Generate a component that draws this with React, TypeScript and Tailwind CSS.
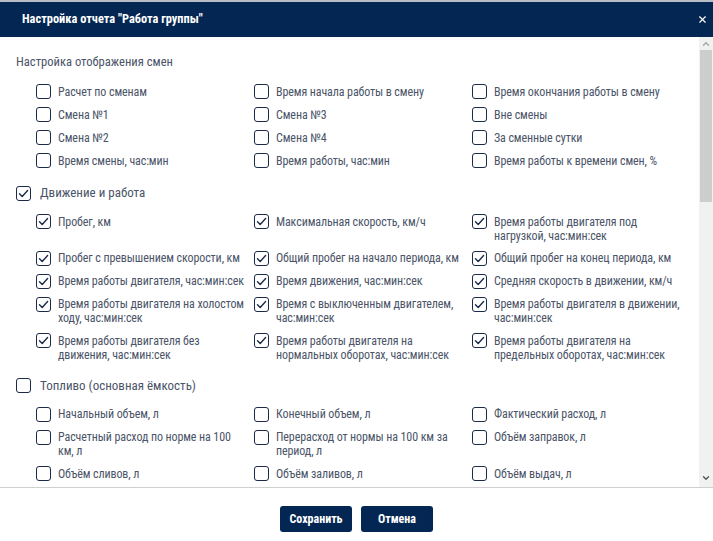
import { X, ChevronUp, ChevronDown } from 'lucide-react';

type Item = { label: string; checked?: boolean };

const shiftItems: string[][] = [
  ['Расчет по сменам', 'Время начала работы в смену', 'Время окончания работы в смену'],
  ['Смена №1', 'Смена №3', 'Вне смены'],
  ['Смена №2', 'Смена №4', 'За сменные сутки'],
  ['Время смены, час:мин', 'Время работы, час:мин', 'Время работы к времени смен, %'],
];

const motionItems: string[][] = [
  ['Пробег, км', 'Максимальная скорость, км/ч', 'Время работы двигателя под нагрузкой, час:мин:сек'],
  ['Пробег с превышением скорости, км', 'Общий пробег на начало периода, км', 'Общий пробег на конец периода, км'],
  ['Время работы двигателя, час:мин:сек', 'Время движения, час:мин:сек', 'Средняя скорость в движении, км/ч'],
  ['Время работы двигателя на холостом ходу, час:мин:сек', 'Время с выключенным двигателем, час:мин:сек', 'Время работы двигателя в движении, час:мин:сек'],
  ['Время работы двигателя без движения, час:мин:сек', 'Время работы двигателя на нормальных оборотах, час:мин:сек', 'Время работы двигателя на предельных оборотах, час:мин:сек'],
];

const fuelItems: string[][] = [
  ['Начальный объем, л', 'Конечный объем, л', 'Фактический расход, л'],
  ['Расчетный расход по норме на 100 км, л', 'Перерасход от нормы на 100 км за период, л', 'Объём заправок, л'],
  ['Объём сливов, л', 'Объём заливов, л', 'Объём выдач, л'],
  ['Средний расход, л/100 км', 'Средний расход в движении, л/ч', 'Расход на холостом ходу, л'],
];

function Checkbox({ checked }: { checked?: boolean }) {
  return (
    <span className="shrink-0 w-[15px] h-[15px] border-[1.5px] border-[#1b2a47] rounded-[3px] bg-white flex items-center justify-center">
      {checked && (
        <svg width="11" height="11" viewBox="0 0 11 11" fill="none">
          <path d="M1.5 5.8 L4.2 8.4 L9.6 2.6" stroke="#1b2a47" strokeWidth="1.4" strokeLinecap="round" strokeLinejoin="round" />
        </svg>
      )}
    </span>
  );
}

function Option({ label, checked }: Item) {
  return (
    <label className="flex items-start gap-[7px]">
      <Checkbox checked={checked} />
      <span className="w-[190px] text-[12px] leading-[14px] pt-[0.5px] tracking-[-0.1px] text-[#4b5468]">{label}</span>
    </label>
  );
}

function Grid({ rows, checked }: { rows: string[][]; checked?: boolean }) {
  return (
    <div className="grid grid-cols-[218px_218px_218px] gap-y-[8px] pl-[36px]">
      {rows.flat().map((label, i) => (
        <Option key={i} label={label} checked={checked} />
      ))}
    </div>
  );
}

function SectionHeader({ title, checked }: { title: string; checked?: boolean }) {
  return (
    <div className="flex items-center gap-[9px] pl-[16px] mb-[13px]">
      <Checkbox checked={checked} />
      <span className="text-[13px] leading-[16px] text-[#4b5468]">{title}</span>
    </div>
  );
}

export default function App() {
  return (
    <div
      className="w-[713px] h-[541px] flex flex-col bg-white overflow-hidden font-stretch-[87.5%]"
      style={{ fontFamily: '"Roboto Condensed", "Liberation Sans Narrow", Roboto, "Noto Sans", sans-serif' }}
    >
      <div className="h-[2px] bg-[#b9bec6]" />
      <div className="h-[35px] bg-[#032652] flex items-center justify-between pl-[22px] pr-[5px]">
        <span className="text-white text-[12.4px] font-bold">Настройка отчета "Работа группы"</span>
        <X className="w-[11px] h-[11px] text-white" strokeWidth={2.5} />
      </div>

      <div className="flex flex-1 min-h-0">
        <div className="flex-1 overflow-hidden pt-[17px]">
          <div className="pl-[16px] text-[12.6px] leading-[16px] text-[#4b5468] mb-[14px]">Настройка отображения смен</div>
          <Grid rows={shiftItems} />

          <div className="h-[17px]" />
          <SectionHeader title="Движение и работа" checked />
          <Grid rows={motionItems} checked />

          <div className="h-[16px]" />
          <SectionHeader title="Топливо (основная ёмкость)" />
          <Grid rows={fuelItems} />
        </div>

        <div className="w-[14px] bg-[#f1f1f1] flex flex-col items-center">
          <ChevronUp className="w-[10px] h-[10px] mt-[2px] text-[#a3a3a3]" strokeWidth={3} />
          <div className="w-[12px] h-[152px] mt-[1px] bg-[#cdcdcd]" />
          <div className="flex-1" />
          <ChevronDown className="w-[10px] h-[10px] mb-[4px] text-[#505050]" strokeWidth={3} />
        </div>
      </div>

      <div className="h-[54px] border-t border-[#cfcfcf] flex justify-center items-start pt-[18px] gap-[9px]">
        <button className="w-[72px] h-[26px] rounded-[3px] bg-[#032652] text-white text-[12px] font-bold">
          Сохранить
        </button>
        <button className="w-[72px] h-[26px] rounded-[3px] bg-[#032652] text-white text-[12px] font-bold">
          Отмена
        </button>
      </div>
    </div>
  );
}
